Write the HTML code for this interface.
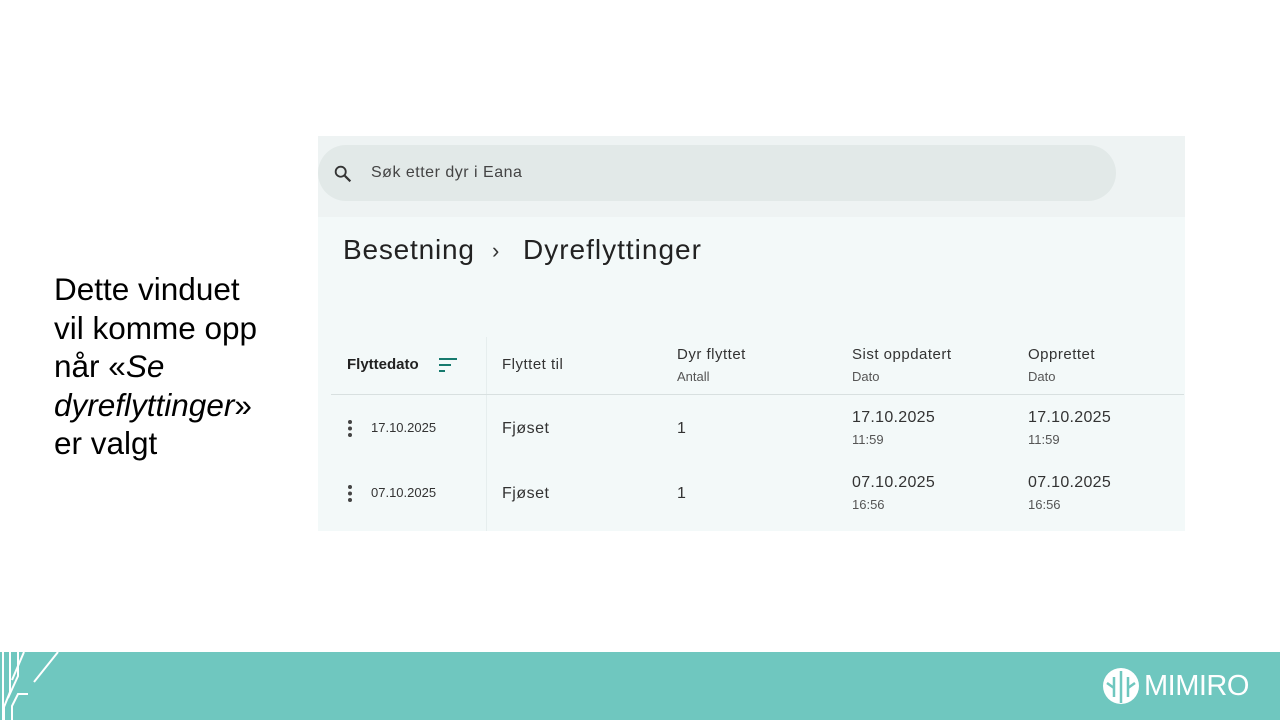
<!DOCTYPE html>
<html><head><meta charset="utf-8"><style>
body{margin:0;width:1280px;height:720px;position:relative;background:#fff;font-family:"Liberation Sans",sans-serif;overflow:hidden}
.a{position:absolute}
.t{color:#222}
</style></head><body>
<div class="a" style="left:54px;top:270px;font-size:31.5px;line-height:38.5px;color:#000">Dette vinduet<br>vil komme opp<br>når «<i>Se<br>dyreflyttinger</i>»<br>er valgt</div>

<div class="a" style="left:318px;top:136px;width:867px;height:81px;background:#eef3f3"></div>
<div class="a" style="left:318px;top:145px;width:798px;height:56px;background:#e2e9e8;border-radius:28px"></div>
<svg class="a" style="left:332px;top:163px" width="22" height="22" viewBox="0 0 24 24"><circle cx="9.5" cy="9.5" r="5.5" fill="none" stroke="#333" stroke-width="2"/><path d="M14 14l6 6" stroke="#333" stroke-width="2.4"/></svg>
<div class="a" style="left:371px;top:164px;font-size:16px;color:#444;letter-spacing:.5px">Søk etter dyr i Eana</div>

<div class="a" style="left:318px;top:217px;width:867px;height:314px;background:#f3f9f9"></div>
<div class="a t" style="left:343px;top:234px;font-size:28px;letter-spacing:.8px">Besetning</div>
<div class="a" style="left:492px;top:238px;font-size:22px;color:#333">›</div>
<div class="a t" style="left:523px;top:234px;font-size:28px;letter-spacing:1px">Dyreflyttinger</div>

<div class="a" style="left:486px;top:337px;width:1px;height:194px;background:#e6eeee"></div>
<div class="a" style="left:331px;top:394px;width:853px;height:1px;background:#d8e0e0"></div>

<div class="a" style="left:347px;top:356px;font-size:15px;font-weight:bold;color:#222">Flyttedato</div>
<svg class="a" style="left:438px;top:357px" width="22" height="16"><path d="M1 2h18M1 8h12M1 14h6" stroke="#167a6e" stroke-width="2"/></svg>
<div class="a" style="left:502px;top:356px;font-size:15px;color:#333;letter-spacing:.5px">Flyttet til</div>
<div class="a" style="left:677px;top:346px;font-size:15px;color:#333;letter-spacing:.5px">Dyr flyttet</div>
<div class="a" style="left:677px;top:369px;font-size:13px;color:#555">Antall</div>
<div class="a" style="left:852px;top:346px;font-size:15px;color:#333;letter-spacing:.5px">Sist oppdatert</div>
<div class="a" style="left:852px;top:369px;font-size:13px;color:#555">Dato</div>
<div class="a" style="left:1028px;top:346px;font-size:15px;color:#333;letter-spacing:.5px">Opprettet</div>
<div class="a" style="left:1028px;top:369px;font-size:13px;color:#555">Dato</div>

<svg class="a" style="left:346px;top:419px" width="8" height="20"><circle cx="4" cy="3" r="2" fill="#444"/><circle cx="4" cy="9.5" r="2" fill="#444"/><circle cx="4" cy="16" r="2" fill="#444"/></svg>
<div class="a" style="left:371px;top:420px;font-size:13px;color:#333">17.10.2025</div>
<div class="a" style="left:502px;top:420px;font-size:16px;color:#333;letter-spacing:.5px">Fjøset</div>
<div class="a" style="left:677px;top:420px;font-size:16px;color:#333">1</div>
<div class="a" style="left:852px;top:409px;font-size:16px;color:#333;letter-spacing:.3px">17.10.2025</div>
<div class="a" style="left:852px;top:432px;font-size:13px;color:#555">11:59</div>
<div class="a" style="left:1028px;top:409px;font-size:16px;color:#333;letter-spacing:.3px">17.10.2025</div>
<div class="a" style="left:1028px;top:432px;font-size:13px;color:#555">11:59</div>

<svg class="a" style="left:346px;top:484px" width="8" height="20"><circle cx="4" cy="3" r="2" fill="#444"/><circle cx="4" cy="9.5" r="2" fill="#444"/><circle cx="4" cy="16" r="2" fill="#444"/></svg>
<div class="a" style="left:371px;top:485px;font-size:13px;color:#333">07.10.2025</div>
<div class="a" style="left:502px;top:485px;font-size:16px;color:#333;letter-spacing:.5px">Fjøset</div>
<div class="a" style="left:677px;top:485px;font-size:16px;color:#333">1</div>
<div class="a" style="left:852px;top:474px;font-size:16px;color:#333;letter-spacing:.3px">07.10.2025</div>
<div class="a" style="left:852px;top:497px;font-size:13px;color:#555">16:56</div>
<div class="a" style="left:1028px;top:474px;font-size:16px;color:#333;letter-spacing:.3px">07.10.2025</div>
<div class="a" style="left:1028px;top:497px;font-size:13px;color:#555">16:56</div>

<div class="a" style="left:0;top:652px;width:1280px;height:68px;background:#6fc7bf"></div>
<svg class="a" style="left:0;top:652px" width="60" height="68"><g stroke="#fff" stroke-width="2" fill="none"><path d="M3 0v68M10 0v40l-6 15v13M18 0v24l-10 22M24 0l-12 28M12 68v-14l6-12h10M58 0l-24 30"/></g></svg>
<svg class="a" style="left:1101px;top:667px" width="40" height="38"><circle cx="20" cy="19" r="18" fill="#fff"/><path d="M20 4v32M13 10v20M27 10v20M6 16l7 5M34 16l-7 5" stroke="#6fc7bf" stroke-width="2.5"/></svg>
<div class="a" style="left:1144px;top:670px;font-size:29px;color:#fff;letter-spacing:-.5px">MIMIRO</div>
</body></html>
